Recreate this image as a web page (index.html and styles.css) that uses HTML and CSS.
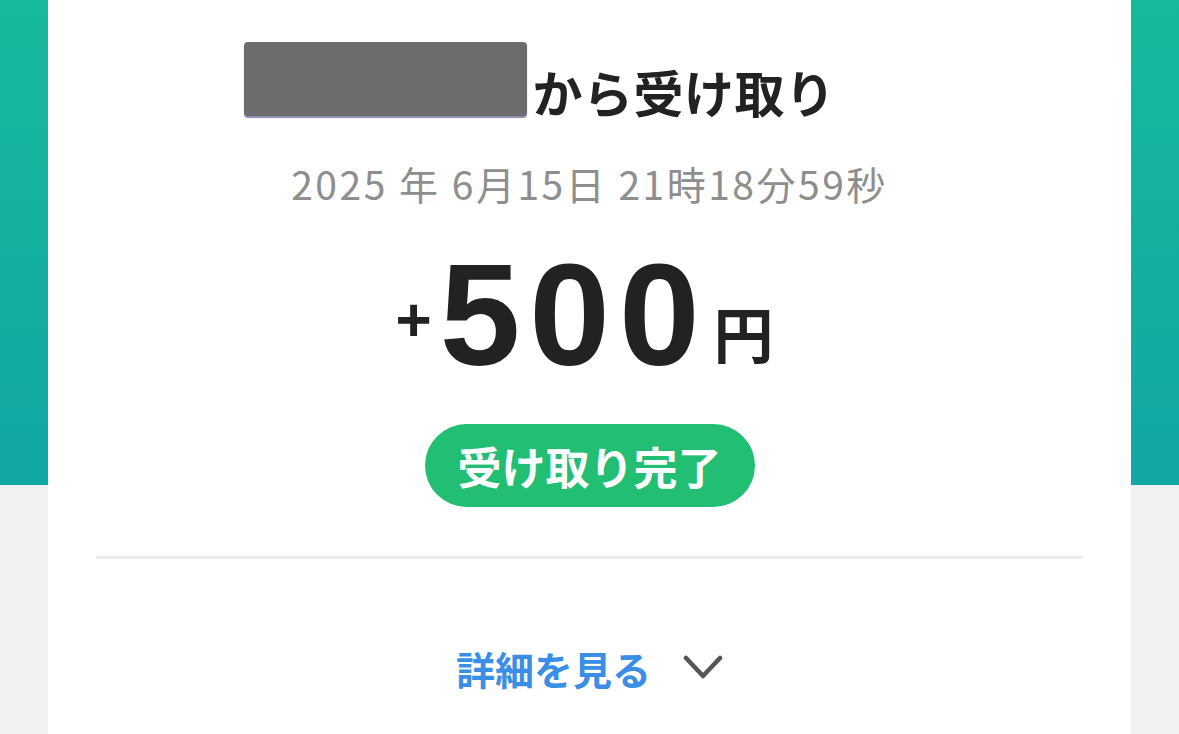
FILE: index.html
```html
<!DOCTYPE html>
<html lang="ja">
<head>
<meta charset="utf-8">
<link rel="stylesheet" href="styles.css">
</head>
<body>
<div class="page">
  <main class="card">
    <h1 class="title"><span class="redact"></span><span class="title-text">から受け取り</span></h1>
    <p class="date">2025 年 6月15日 21時18分59秒</p>
    <div class="amount"><span class="plus">+</span><span class="num">500</span><span class="yen">円</span></div>
    <div class="status">受け取り完了</div>
    <hr class="divider">
    <button class="details">詳細を見る<svg class="chev" width="40" height="28" viewBox="0 0 40 28"><polyline points="3,4 20,22 37,4" fill="none" stroke="#555" stroke-width="4.5" stroke-linecap="round" stroke-linejoin="round"/></svg></button>
  </main>
</div>
</body>
</html>
```
FILE: styles.css
```css
html, body {
  margin: 0;
  padding: 0;
}
body {
  width: 1179px;
  height: 734px;
  overflow: hidden;
  background: linear-gradient(to bottom, #17b99b 0px, #11a7a5 485px, #f1f1f1 485px, #f1f1f1 100%);
  font-family: "Liberation Sans", "Noto Sans CJK JP", sans-serif;
}
.page {
  display: flex;
  justify-content: center;
  height: 734px;
}
.card {
  width: 1083px;
  background: #fff;
  display: flex;
  flex-direction: column;
  align-items: center;
  padding-top: 42px;
  box-sizing: border-box;
}
.title {
  margin: 0;
  display: flex;
  align-items: center;
  height: 74px;
  padding-right: 100px;
  font-family: "Noto Sans CJK JP", sans-serif;
  font-size: 50px;
  font-weight: 700;
  color: #222;
  letter-spacing: 0.5px;
}
.redact {
  display: inline-block;
  width: 283px;
  height: 74px;
  border-radius: 4px;
  background: #6c6c6e;
  box-shadow: 0 2px 1px rgba(40, 50, 110, 0.55);
  margin-right: 6px;
}
.title-text {
  line-height: 74px;
  position: relative;
  top: 12px;
}
.date {
  margin: 42px 0 0;
  font-family: "Noto Sans CJK JP", sans-serif;
  font-size: 39px;
  letter-spacing: 2.5px;
  line-height: 50px;
  color: #8e8e8e;
  font-weight: 400;
}
.amount {
  margin-top: 42px;
  display: flex;
  align-items: baseline;
  color: #222;
  height: 130px;
  padding-right: 10px;
}
.plus {
  font-family: "Liberation Sans", sans-serif;
  font-weight: 700;
  font-size: 62px;
  position: relative;
  top: -24px;
  margin-right: 8px;
}
.num {
  font-family: "Liberation Sans", sans-serif;
  font-weight: 700;
  font-size: 145px;
  letter-spacing: 9px;
  line-height: 130px;
}
.yen {
  font-family: "Noto Sans CJK JP", sans-serif;
  font-weight: 700;
  font-size: 60px;
  margin-left: 5px;
  position: relative;
  top: -7px;
}
.status {
  margin-top: 44px;
  width: 330px;
  height: 83px;
  border-radius: 42px;
  background: #22be74;
  color: #fff;
  display: flex;
  align-items: center;
  justify-content: center;
  font-family: "Noto Sans CJK JP", sans-serif;
  font-size: 44px;
  font-weight: 700;
}
.divider {
  align-self: stretch;
  margin: 49px 48px 0;
  border: 0;
  height: 3px;
  background: #ebebeb;
}
.details {
  margin-top: 84px;
  border: 0;
  background: none;
  padding: 0;
  display: flex;
  align-items: center;
  gap: 32px;
  font-family: "Noto Sans CJK JP", sans-serif;
  font-size: 39px;
  font-weight: 700;
  color: #3a8ee6;
  line-height: 50px;
}
.chev {
  display: block;
}
```
